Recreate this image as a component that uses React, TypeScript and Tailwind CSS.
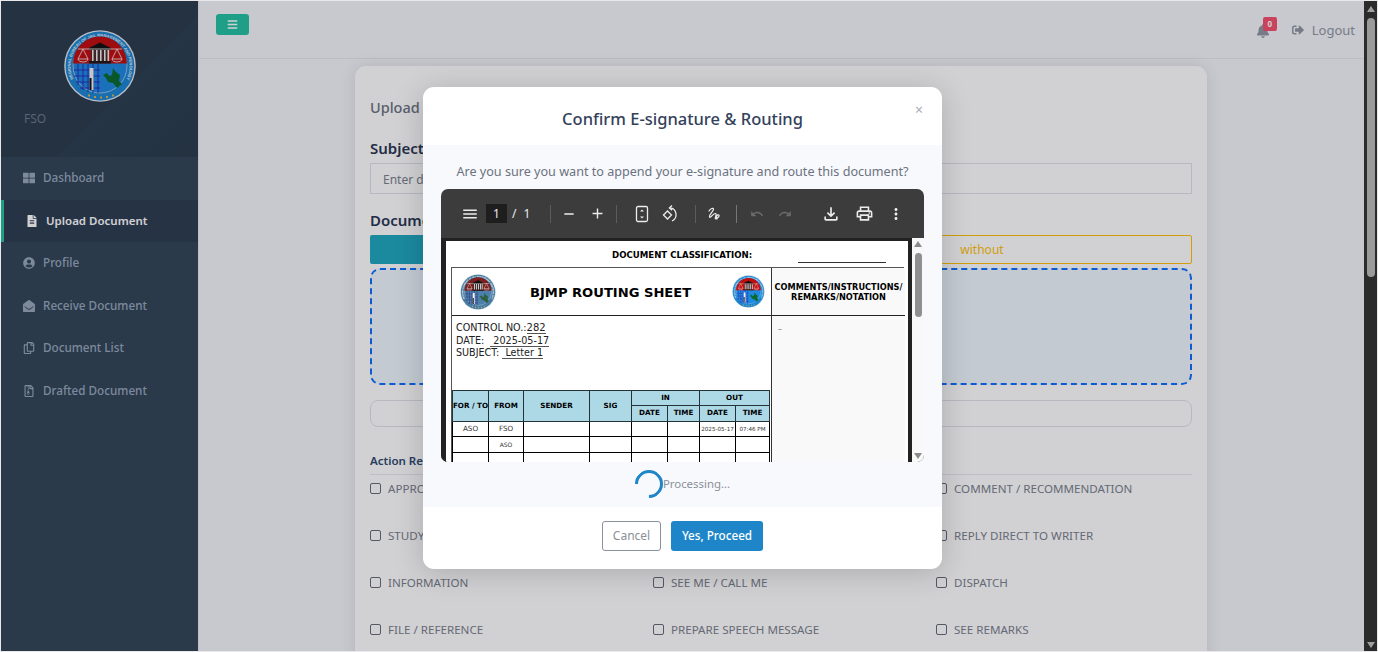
import React from 'react';
import { FaBars, FaBell, FaEnvelopeOpen, FaFileAlt, FaRegCopy, FaRegFileArchive, FaSignOutAlt, FaThLarge, FaUserCircle } from 'react-icons/fa';
import { MdAdd, MdMenu, MdMoreVert, MdOutlineFileDownload, MdOutlinePrint, MdRedo, MdRemove, MdUndo } from 'react-icons/md';

const navItems = [
  { label: 'Dashboard', icon: <FaThLarge size={12} />, gap: 'gap-[8px]' },
  { label: 'Upload Document', icon: <FaFileAlt size={12} />, gap: 'gap-[8px]', active: true },
  { label: 'Profile', icon: <FaUserCircle size={12} />, gap: 'gap-[8px]' },
  { label: 'Receive Document', icon: <FaEnvelopeOpen size={12} />, gap: 'gap-[8px]' },
  { label: 'Document List', icon: <FaRegCopy size={12} />, gap: 'gap-[8px]' },
  { label: 'Drafted Document', icon: <FaRegFileArchive size={12} />, gap: 'gap-[8px]' },
];

// the middle column's first two rows sit fully behind the modal
const actions = [
  ['APPROVAL', '', 'COMMENT / RECOMMENDATION'],
  ['STUDY', '', 'REPLY DIRECT TO WRITER'],
  ['INFORMATION', 'SEE ME / CALL ME', 'DISPATCH'],
  ['FILE / REFERENCE', 'PREPARE SPEECH MESSAGE', 'SEE REMARKS'],
];

const Seal = ({ id, className = '', size }: { id: string; className?: string; size: number }) => (
  <svg width={size} height={size} viewBox="0 0 72 72" className={`overflow-visible ${className}`}>
    <circle cx="36" cy="36" r="35.8" fill="#dfe6ee" />
    <circle cx="36" cy="36" r="34.4" fill="#1c86d0" />
    <path id={id} d="M9.5 49 A29.5 29.5 0 1 1 62.5 49" fill="none" />
    <text fontSize="4" fontWeight="700" fill="#e8f2fb" fontFamily="'Liberation Sans', sans-serif">
      <textPath href={`#${id}`}>REGIONAL BUREAU OF JAIL MANAGEMENT AND PENOLOGY 10</textPath>
    </text>
    <circle cx="36" cy="36" r="27" fill="#1f88e0" stroke="#dfe6ee" strokeWidth="0.6" />
    <path d="M9 33.5 A27 27 0 0 1 63 33.5 Z" fill="#c00d0d" />
    <path d="M25 18 L36 12.5 L47 18 Z" fill="#111" />
    <path d="M25 18h22v2H25zM25 31h22v2.5H25z" fill="#1a1a1a" />
    <path d="M27 20h18v11H27z" fill="#4a2a2a" />
    <path d="M28 20h1.6v11H28zM32 20h1.6v11H32zM36 20h1.6v11H36zM40 20h1.6v11H40zM43.5 20h1.6v11h-1.6z" fill="#eee" />
    <path d="M14 19h44M19 19l-5 10h10zM53 19l-5 10h10zM14 29a5 3 0 0 0 10 0M48 29a5 3 0 0 0 10 0" fill="none" stroke="#f4f4f4" strokeWidth="0.8" />
    <path d="M14 34v21M19 34v26M24 34v28M29 34v29M34 34v29M10 40h26M10 46h26M12 52h24M16 58h20" stroke="#2528b5" strokeWidth="0.9" fill="none" />
    <path d="M25.5 38h4v22h-4z" fill="#f2f2f2" />
    <path d="M25.5 48h2v12h-2z" fill="#111" />
    <path d="M39 45l4-2 2 3 3-1 1-7 3 4 4 3-1 6 3 3-5 4-4-5-5-1-2-4z" fill="#0b6b2e" />
    <path d="M24 65.5h2M30 67h2M36 67.5h2M42 67h2M48 65.5h2" stroke="#d9b44a" strokeWidth="2" />
  </svg>
);

const Divider = ({ className }: { className: string }) => <div className={`h-[18px] w-px bg-[#5c5c5c] ${className}`} />;

const Slot = ({ children, className = '' }: { children: React.ReactNode; className?: string }) => (
  <div className={`flex h-7 w-7 items-center justify-center ${className}`}>{children}</div>
);

const PdfToolbar = () => (
  <div className="flex h-[49px] items-center pl-[15px] text-[#ececec]">
    <Slot><MdMenu size={18} /></Slot>
    <div className="ml-[2px] flex h-[19px] w-[21px] items-center justify-center bg-[#1e1e1e] text-[12px]">1</div>
    <span className="w-[40px] pl-[5px] text-[12px] tracking-[2px]">/ 1</span>
    <Divider className="ml-[3px]" />
    <Slot className="ml-[4px]"><MdRemove size={16} /></Slot>
    <Slot><MdAdd size={17} /></Slot>
    <Divider className="ml-[5px]" />
    <Slot className="ml-[11px]">
      <svg width="16" height="18" viewBox="0 0 16 18" fill="none" stroke="currentColor">
        <rect x="2.5" y="1.5" width="11" height="15" rx="1.5" strokeWidth="1.3" />
        <path d="M8 4.5l-2 2h4zM8 13.5l-2-2h4z" fill="currentColor" stroke="none" />
      </svg>
    </Slot>
    <Slot className="ml-[1px]">
      <svg width="18" height="18" viewBox="0 0 18 18" fill="none" stroke="currentColor" strokeWidth="1.3">
        <path d="M1.5 10l4-4 4 4-4 4z" />
        <path d="M8.5 2.8A7 7 0 0 1 10 16" />
        <path d="M10 0.6L7.4 2.9 10 5.2" />
      </svg>
    </Slot>
    <Divider className="ml-[10px]" />
    <Slot className="ml-[4px]">
      <svg width="16" height="16" viewBox="0 0 16 16" fill="none" stroke="currentColor" strokeWidth="1.2" strokeLinecap="round">
        <path d="M3 5C4.5 2.5 7.5 1.5 7.5 3.2S2.5 9.5 3.5 11 7.5 7 9.5 7.5 8 13 9.8 12.8 14 10 12.8 9 9.5 10.5 11 13" />
      </svg>
    </Slot>
    <Divider className="ml-[8px] !bg-[#777]" />
    <Slot className="ml-[6px] text-[#6a6a6a]"><MdUndo size={14} /></Slot>
    <Slot className="text-[#6a6a6a]"><MdRedo size={14} /></Slot>
    <Slot className="ml-[18px]"><MdOutlineFileDownload size={20} /></Slot>
    <Slot className="ml-[5px]"><MdOutlinePrint size={19} /></Slot>
    <Slot className="ml-[4px]"><MdMoreVert size={18} /></Slot>
  </div>
);

const thClass = 'border border-[#26323a] bg-[#add8e6] p-0 text-center text-[7.2px] font-bold';
const tdClass = 'border border-black p-0 text-center text-[#333]';

const RoutingSheet = () => (
  <div className="h-full w-[462px] overflow-hidden bg-white font-['DejaVu_Sans',sans-serif] text-black">
    <div className="relative h-[26px] pl-[166px] pt-[8px] text-[8.6px] leading-[12px] font-bold">
      DOCUMENT CLASSIFICATION:
      <div className="absolute top-[21px] left-[352px] h-px w-[88px] bg-[#333]" />
    </div>
    <div className="ml-[5px] grid w-[453px] grid-cols-[320px_133px] border border-[#555]">
      <div className="border-r border-[#333]">
        <div className="flex h-[48px] items-center border-b border-[#222] pr-[6px] pl-[8px]">
          <Seal id="docSealA" size={36} className="saturate-50" />
          <span className="mt-[3px] ml-[34px] text-[13.1px] font-bold whitespace-nowrap">BJMP ROUTING SHEET</span>
          <Seal id="docSealB" size={33} className="ml-auto" />
        </div>
        <div className="h-[74px] pt-[6px] pl-[4px] text-[9.6px] leading-[12.7px] text-[#222]">
          <div>CONTROL NO.:<span className="border-b border-[#555] text-[10px]">282</span></div>
          <div>DATE:&nbsp;&nbsp;<span className="border-b border-[#555]">&nbsp;2025-05-17</span></div>
          <div>SUBJECT:&nbsp;<span className="border-b border-[#555]">&nbsp;Letter 1</span></div>
        </div>
        <table className="w-[317px] table-fixed border-collapse">
          <colgroup>
            <col className="w-[36px]" /><col className="w-[35px]" /><col className="w-[66px]" /><col className="w-[42px]" />
            <col className="w-[36px]" /><col className="w-[32px]" /><col className="w-[36px]" /><col className="w-[34px]" />
          </colgroup>
          <thead>
            <tr className="h-[15px]">
              <th rowSpan={2} className={thClass}><span className="-mx-[2px] whitespace-nowrap">FOR / TO</span></th>
              <th rowSpan={2} className={thClass}>FROM</th>
              <th rowSpan={2} className={thClass}>SENDER</th>
              <th rowSpan={2} className={thClass}>SIG</th>
              <th colSpan={2} className={thClass}>IN</th>
              <th colSpan={2} className={thClass}>OUT</th>
            </tr>
            <tr className="h-[16px]">
              <th className={thClass}>DATE</th><th className={thClass}>TIME</th><th className={thClass}>DATE</th><th className={thClass}>TIME</th>
            </tr>
          </thead>
          <tbody>
            <tr className="h-[15px] text-[7.2px]">
              <td className={tdClass}>ASO</td><td className={tdClass}>FSO</td><td className={tdClass} /><td className={tdClass} />
              <td className={tdClass} /><td className={tdClass} />
              <td className={`${tdClass} text-[5.6px] whitespace-nowrap`}>2025-05-17</td>
              <td className={`${tdClass} text-[5.6px] whitespace-nowrap`}>07:46 PM</td>
            </tr>
            <tr className="h-[16px] text-[6px]">
              <td className={tdClass} /><td className={tdClass}>ASO</td><td className={tdClass} /><td className={tdClass} />
              <td className={tdClass} /><td className={tdClass} /><td className={tdClass} /><td className={tdClass} />
            </tr>
            <tr className="h-[16px]">
              {[0, 1, 2, 3, 4, 5, 6, 7].map((i) => <td key={i} className={tdClass} />)}
            </tr>
          </tbody>
        </table>
      </div>
      <div className="bg-[#f9f9f9]">
        <div className="flex h-[48px] flex-col items-center justify-center border-b border-[#222] text-[8.2px] leading-[10px] font-bold whitespace-nowrap">
          <span>COMMENTS/INSTRUCTIONS/</span>
          <span>REMARKS/NOTATION</span>
        </div>
        <div className="h-[200px] pt-[7px] pl-[6px] text-[8px] leading-[14px] text-[#777]">–</div>
      </div>
    </div>
  </div>
);

const ConfirmModal = () => (
  <div className="absolute inset-0 flex justify-center bg-[rgba(10,12,25,0.19)] pt-[86px]">
    <div className="relative h-[482px] w-[519px] overflow-hidden rounded-[11px] bg-white shadow-[0_4px_30px_rgba(0,0,0,0.18)]">
      <button className="absolute top-[13px] right-[19px] text-[14px] leading-[20px] text-[#a8adb5]">×</button>
      <div className="flex h-[58px] items-center justify-center pt-[7px] text-[16.5px] font-medium text-[#33415c]">
        Confirm E-signature &amp; Routing
      </div>
      <div className="h-[362px] bg-[#f8f9fc]">
        <p className="pt-[16px] text-center text-[12.6px] leading-[21px] text-[#6b7280]">
          Are you sure you want to append your e-signature and route this document?
        </p>
        <div className="mx-[18px] mt-[7px] h-[273px] overflow-hidden rounded-[7px] bg-[#3c3c3c]">
          <PdfToolbar />
          <div className="flex h-[224px]">
            <div className="flex h-full w-[471px] flex-col bg-[#222] pl-[5px] pr-[4px] pt-[3px]">
              <RoutingSheet />
            </div>
            <div className="flex w-[12px] flex-col items-center bg-[#f8f8f8]">
              <div className="mt-[3px] h-0 w-0 border-x-[4px] border-b-[6px] border-x-transparent border-b-[#8a8a8a]" />
              <div className="mt-[6px] h-[64px] w-[7px] rounded-[4px] bg-[#8f8f8f]" />
              <div className="mt-auto mb-[3px] h-0 w-0 border-x-[4px] border-t-[6px] border-x-transparent border-t-[#8a8a8a]" />
            </div>
          </div>
        </div>
        <div className="mt-[8px] flex h-[28px] items-center justify-center">
          <div className="h-[28px] w-[28px] rotate-45 rounded-full border-[3px] border-[#1e86c8] border-b-transparent" />
          <span className="text-[11.4px] text-[#8a909a]">Processing...</span>
        </div>
      </div>
      <div className="flex justify-center gap-[10px] pt-[14px]">
        <button className="h-[30px] w-[59px] rounded-[3px] border border-[#8a9099] bg-white text-[12px] text-[#8a9099]">Cancel</button>
        <button className="h-[30px] w-[92px] rounded-[3px] bg-[#1e86c8] text-[11.7px] font-medium text-white">Yes, Proceed</button>
      </div>
    </div>
  </div>
);

const Sidebar = () => (
  <aside className="flex w-[197px] shrink-0 flex-col bg-[#324556]">
    <div className="h-[156px] bg-[linear-gradient(135deg,#2a3c4b_0%,#2a3c4b_60%,#2c3f4f_60%,#2a3c4b_100%)]">
      <div className="flex justify-center pt-[29px]">
        <Seal id="sideSeal" size={72} />
      </div>
      <div className="pt-[8px] pl-[23px] text-[12px] leading-[18px] text-[#6d7986]">FSO</div>
    </div>
    <nav>
      {navItems.map((item) => (
        <div
          key={item.label}
          className={`flex h-[42.5px] items-center ${item.gap} ${
            item.active
              ? 'border-l-[3px] border-[#26c2a2] bg-[#2d3d4f] pl-[22px] text-[11.5px] font-semibold text-[#ffffff]'
              : 'pl-[22px] text-[11.7px] font-medium text-[#98a8bc]'
          }`}
        >
          {item.icon}
          <span>{item.label}</span>
        </div>
      ))}
    </nav>
  </aside>
);

const UploadCard = () => (
  <div className="mt-[7px] mr-[157px] ml-[156px] rounded-t-[11px] bg-white px-[15px] pt-[31px] shadow-[0_0_16px_rgba(0,0,0,0.1)]">
    <div className="text-[14.5px] leading-[20px] font-medium text-[#6b7280]">Upload Document</div>
    <div className="mt-[21px] text-[15px] leading-[20px] font-semibold text-[#2a3650]">Subject</div>
    <input
      placeholder="Enter document subject"
      className="mt-[5px] h-[31px] w-full border border-[#dee2e6] px-[12px] pt-[1px] text-[12px] placeholder:text-[#7a818b]"
    />
    <div className="mt-[16px] text-[15px] leading-[20px] font-semibold text-[#2a3650]">Document Type</div>
    <div className="mt-[5px] grid grid-cols-[400px_1fr] gap-x-[2px]">
      <div className="h-[29px] rounded-[2px] bg-[#1fa8be]" />
      <div className="flex h-[29px] items-center justify-center rounded-[2px] border border-[#ffc107] text-[12px] text-[#ffc107]">without</div>
    </div>
    <div className="mt-[4px] h-[117px] rounded-[10px] border-2 border-dashed border-[#0d6efd] bg-[#eef7fd]" />
    <div className="mt-[15px] h-[27px] rounded-[8px] border border-[#dee2e6]" />
    <div className="mt-[26px] border-b border-[#e8e9ec] pb-[5px] text-[11.5px] leading-[16px] font-semibold text-[#2d4a6e]">Action Required</div>
    <div className="grid grid-cols-[283px_283px_1fr]">
      {actions.flat().map((label, i) => (
        <label key={i} className="flex h-[47px] items-start gap-[7px] pt-[8px] text-[11.6px] leading-[12px] text-[#7a808a]">
          <span className="h-[11px] w-[11px] rounded-[2px] border border-[#666c75] bg-white" />
          {label}
        </label>
      ))}
    </div>
  </div>
);

export default function App() {
  return (
    <div className="flex h-[652px] w-full overflow-hidden bg-[#e8e8ea] p-px font-['Noto_Sans','Open_Sans',sans-serif]">
      <div className="relative flex min-w-0 flex-1 overflow-hidden">
        <Sidebar />
        <main className="ml-px min-w-0 flex-1 overflow-hidden bg-[#f4f5f9]">
          <header className="flex h-[58px] items-start justify-between border-b border-[#e6e7eb] pr-[9px] pl-[17px]">
            <button className="mt-[13px] flex h-[21px] w-[33px] items-center justify-center rounded-[3px] bg-[#26c2a2] text-white">
              <FaBars size={11} />
            </button>
            <div className="flex items-center pt-[17px] text-[#8f96a1]">
              <div className="relative mr-[22px] h-[24px] w-[14px]">
                <FaBell size={14} className="absolute top-[6px] left-0" />
                <span className="absolute top-[-1px] left-[7px] flex h-[14px] w-[14px] items-center justify-center rounded-[2px] bg-[#f5506c] text-[8px] font-bold text-white">0</span>
              </div>
              <FaSignOutAlt size={12} />
              <span className="ml-[8px] text-[13px] leading-[24px]">Logout</span>
            </div>
          </header>
          <UploadCard />
        </main>
        <ConfirmModal />
      </div>
      <div className="flex w-[13px] shrink-0 flex-col items-center bg-[#2b2b2b]">
        <div className="mt-[5px] h-0 w-0 border-x-[4px] border-b-[6px] border-x-transparent border-b-[#a0a0a0]" />
        <div className="mt-[6px] h-[259px] w-[8px] rounded-[4px] bg-[#9b9b9b]" />
        <div className="mt-auto mb-[3px] h-0 w-0 border-x-[4px] border-t-[6px] border-x-transparent border-t-[#a0a0a0]" />
      </div>
    </div>
  );
}
